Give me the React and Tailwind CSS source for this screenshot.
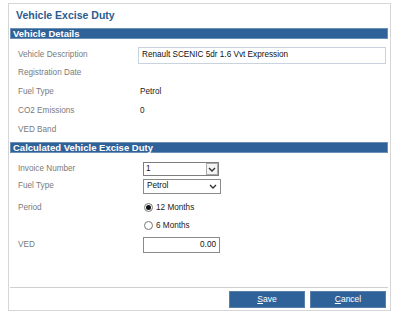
import React from 'react'

const font = { fontFamily: '"Liberation Sans", Arial, sans-serif' }

function SectionBar({ children }) {
  return (
    <div className="ml-[1px] mr-[2px] h-[11px] bg-[#30629a] border border-[#6c8fb6] flex items-center pl-[2px] text-white font-bold text-[9.5px] leading-none">
      {children}
    </div>
  )
}

function Row({ label, children, className = 'h-[19px]' }) {
  return (
    <div className={`flex items-center pl-[9px] ${className}`}>
      <div className="w-[122px] text-[8.2px] text-[#7a7a7a]">{label}</div>
      <div className="flex-1 flex items-center text-[8.2px] text-[#222]">{children}</div>
    </div>
  )
}

function Chevron() {
  return (
    <svg width="8" height="5" viewBox="0 0 8 5">
      <path d="M1 1 L4 4 L7 1" fill="none" stroke="#333" strokeWidth="1.4" />
    </svg>
  )
}

function Radio({ checked, label }) {
  return (
    <div className="flex items-center gap-[3px] ml-[1px]">
      <span className="w-[9px] h-[9px] rounded-full border border-[#777] bg-white flex items-center justify-center">
        {checked && <span className="w-[5px] h-[5px] rounded-full bg-[#111]" />}
      </span>
      <span className="text-[8.2px] text-[#222]">{label}</span>
    </div>
  )
}

function Button({ hot, rest }) {
  return (
    <div className="w-[76px] h-[17px] bg-[#30629a] border border-[#5a80aa] flex items-center justify-center text-white text-[8.5px]">
      <span className="underline">{hot}</span>
      {rest}
    </div>
  )
}

export default function App() {
  return (
    <div className="w-[408px] h-[321px] bg-white pt-[3px] pl-[8px]" style={font}>
      <div className="w-[383px] h-[308px] border border-[#d6d6d6] flex flex-col">
        <div className="h-[23px] flex items-center pl-[7px] pt-[1px] text-[10.5px] font-bold text-[#2b5c8e]">
          Vehicle Excise Duty
        </div>
        <div className="mt-[1px]">
          <SectionBar>Vehicle Details</SectionBar>
        </div>

        <div className="mt-[7px]">
          <Row label="Vehicle Description" className="h-[18px]">
            <div className="-ml-[2px] w-[248px] h-[17px] border border-[#c9d3df] flex items-center pl-[3px] text-[8.2px] text-[#111]">
              Renault SCENIC 5dr 1.6 Vvt Expression
            </div>
          </Row>
          <Row label="Registration Date" />
          <Row label="Fuel Type">Petrol</Row>
          <Row label="CO2 Emissions">0</Row>
          <Row label="VED Band" />
        </div>

        <div className="mt-[2px]">
          <SectionBar>Calculated Vehicle Excise Duty</SectionBar>
        </div>

        <div className="mt-[8px]">
          <Row label="Invoice Number" className="h-[16px]">
            <div className="ml-[3px] w-[76px] h-[14px] border border-[#7d7d7d] flex items-center justify-between pl-[2px] text-[8.2px] text-[#111]">
              1
              <span className="w-[12px] h-[12px] border border-[#a9a9a9] bg-[#f4f4f4] flex items-center justify-center">
                <Chevron />
              </span>
            </div>
          </Row>
          <Row label="Fuel Type" className="h-[18px]">
            <div className="ml-[3px] w-[78px] h-[15px] border border-[#8a8a8a] flex items-center justify-between pl-[3px] pr-[3px] text-[8.2px] text-[#111]">
              Petrol
              <Chevron />
            </div>
          </Row>
          <Row label="Period" className="h-[18px] mt-[4px]">
            <div className="ml-[3px]">
              <Radio checked label="12 Months" />
            </div>
          </Row>
          <Row label="" className="h-[18px]">
            <div className="ml-[3px]">
              <Radio label="6 Months" />
            </div>
          </Row>
          <Row label="VED" className="h-[18px] mt-[1px]">
            <div className="ml-[3px] w-[77px] h-[16px] border border-[#8a8a8a] flex items-center justify-end pr-[3px] text-[8.2px] text-[#111]">
              0.00
            </div>
          </Row>
        </div>

        <div className="flex-1" />

        <div className="ml-[1px] mr-[2px] border-t border-[#cfcfcf] pt-[3px] pb-[2px] flex justify-end gap-[5px] pr-[2px]">
          <Button hot="S" rest="ave" />
          <Button hot="C" rest="ancel" />
        </div>
      </div>
    </div>
  )
}
